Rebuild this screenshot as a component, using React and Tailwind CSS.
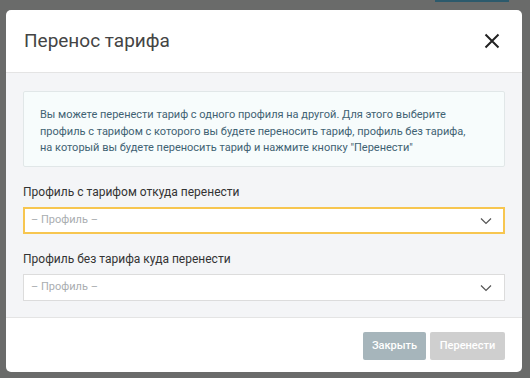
import React from "react";

const Chevron = () => (
  <svg width="12" height="8" viewBox="0 0 12 8" className="text-[#555]">
    <path d="M1 1.5 L6 6.5 L11 1.5" fill="none" stroke="currentColor" strokeWidth="1.2" />
  </svg>
);

const Select = ({ focused }) => (
  <div
    className={
      focused
        ? "h-[27px] flex items-center justify-between bg-white border-2 border-[#f7c650] pl-[6px] pr-[11px]"
        : "h-[27px] flex items-center justify-between bg-white border border-[#dcdcdc] pl-[7px] pr-[12px]"
    }
  >
    <span className="text-[11px] text-[#a9adb0]">– Профиль –</span>
    <Chevron />
  </div>
);

export default function App() {
  return (
    <div className="relative w-[530px] h-[378px] bg-[#6a6b6a] overflow-hidden font-['Roboto',sans-serif]">
      <div className="absolute top-0 left-[435px] w-[74px] h-[2px] bg-[#2c5a6c]" />

      <div className="relative ml-[6px] pt-[10px]">
        <div className="w-[516px] h-[362px] bg-white rounded-[5px] flex flex-col overflow-hidden">
          {/* header */}
          <div className="h-[63px] shrink-0 flex items-center justify-between pl-[18px] pr-[22px] border-b border-[#e4e4e4]">
            <h2 className="text-[19px] text-[#444] font-normal">Перенос тарифа</h2>
            <svg width="16" height="16" viewBox="0 0 16 16">
              <path d="M1.5 1.5 L14.5 14.5 M14.5 1.5 L1.5 14.5" stroke="#222" strokeWidth="2" />
            </svg>
          </div>

          {/* body */}
          <div className="h-[244px] shrink-0 bg-[#f4f5f7] px-[17px] pt-[18px]">
            <div className="h-[76px] bg-[#f7fcfc] border border-[#e1e7e8] rounded-[2px] pl-[16px] pr-[36px] pt-[15px] text-[11px] leading-[16.5px] text-[#3f6273]">
              Вы можете перенести тариф с одного профиля на другой. Для этого выберите профиль с тарифом с которого вы будете переносить тариф, профиль без тарифа, на который вы будете переносить тариф и нажмите кнопку "Перенести"
            </div>

            <div className="mt-[18px] text-[12px] text-[#333] leading-[15px]">
              Профиль с тарифом откуда перенести
            </div>
            <div className="mt-[7px]">
              <Select focused />
            </div>

            <div className="mt-[18px] text-[12px] text-[#333] leading-[15px]">
              Профиль без тарифа куда перенести
            </div>
            <div className="mt-[7px]">
              <Select />
            </div>
          </div>

          {/* footer */}
          <div className="flex-1 border-t border-[#e4e4e4] flex justify-end items-start gap-[4px] pt-[14px] pr-[17px]">
            <button className="h-[28px] w-[63px] rounded-[2px] bg-[#a6b5bb] text-white text-[11px] font-medium">
              Закрыть
            </button>
            <button className="h-[28px] w-[75px] rounded-[2px] bg-[#cfcfcf] text-white text-[11px] font-medium">
              Перенести
            </button>
          </div>
        </div>
      </div>
    </div>
  );
}
